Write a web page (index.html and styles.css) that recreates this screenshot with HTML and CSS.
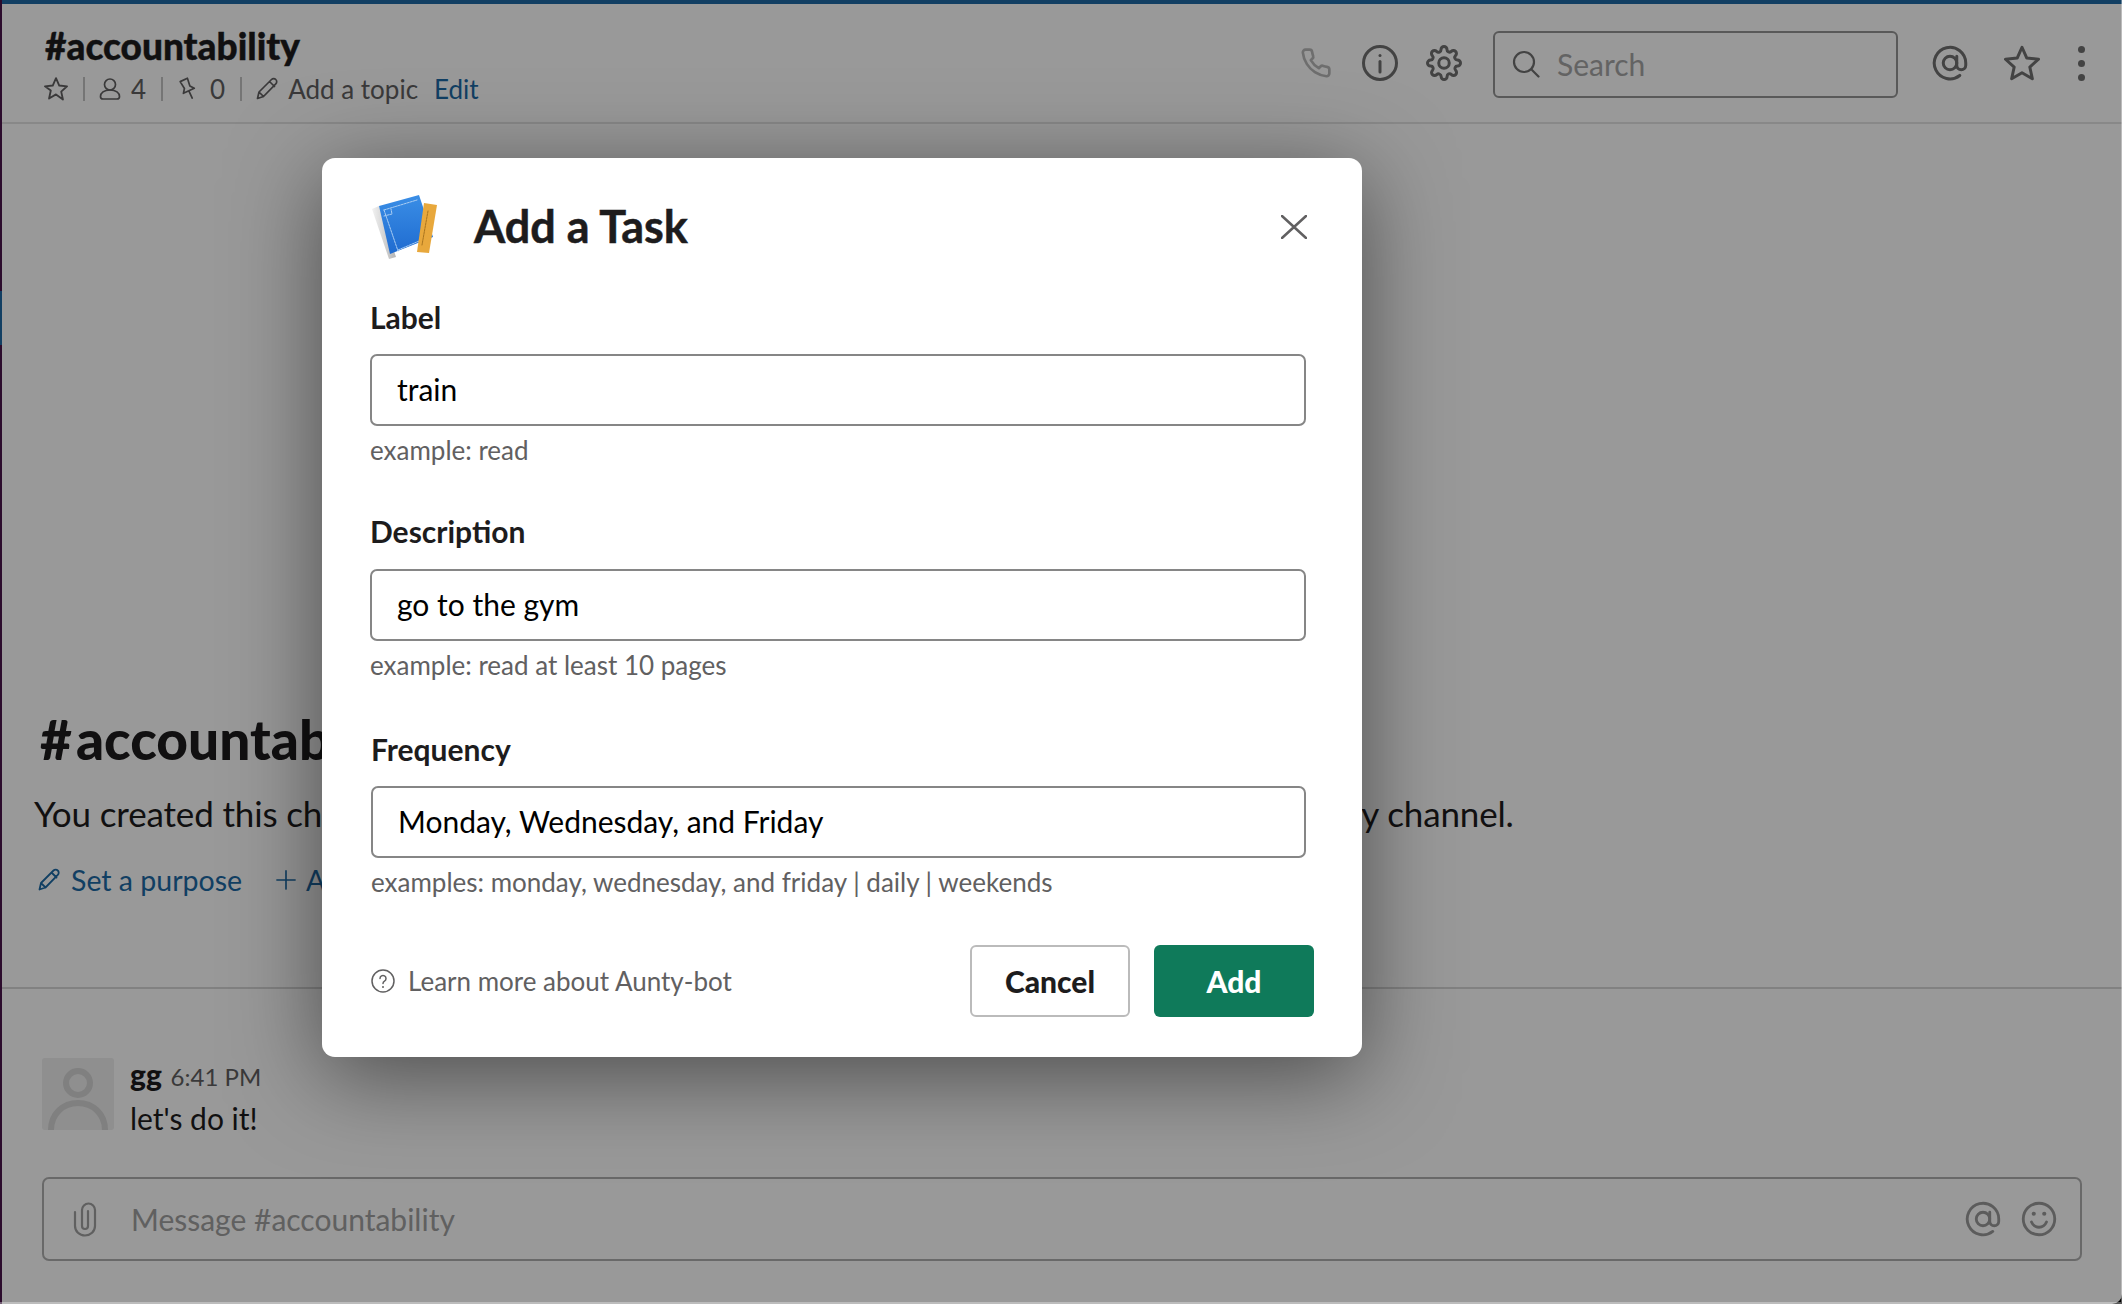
FILE: index.html
```html
<!DOCTYPE html>
<html lang="en">
<head>
  <meta charset="UTF-8" />
  <title>accountability | Slack</title>
  <link rel="stylesheet" href="styles.css">
</head>
<body>
  <div class="app">
    <!-- channel header -->
    <header class="channel-head">
      <div class="channel-info">
        <div class="channel-name">#accountability</div>
        <div class="channel-meta">
          <svg class="meta-icon star" viewBox="0 0 24 24"><path d="M12 2l3 6.8 7.2.7-5.4 4.9 1.6 7.3L12 17l-6.4 3.7 1.6-7.3L1.800 9.500 9 8.800z"/></svg>
          <span class="sep sep-star"></span>
          <svg class="meta-icon person" viewBox="0 0 24 24"><circle cx="12" cy="7.500" r="5.500"/><path d="M12 13c-6 0-9.500 3-9.500 6.500 0 1.800 1 2.500 2.500 2.500h14c1.500 0 2.500-.7 2.500-2.500C21.500 16 18 13 12 13z"/></svg>
          <span class="meta-num">4</span>
          <span class="sep"></span>
          <svg class="meta-icon pin" viewBox="0 0 24 24"><path d="M8 2h8l-1 8 3 4H6l3-4zM12 14v8" transform="rotate(-25 12 12)"/></svg>
          <span class="meta-num num-pins">0</span>
          <span class="sep"></span>
          <svg class="meta-icon pencil" viewBox="0 0 24 24"><path d="M2.500 21.500l1.500-6.500L16.500 2.500a3 3 0 0 1 4.300 0h0a3 3 0 0 1 0 4.300L8.500 19.500zM4 15l4.500 4.500M14.500 4.500l5 5"/></svg>
          <span class="topic">Add a topic</span>
          <a class="link edit">Edit</a>
        </div>
      </div>
      <div class="head-tools">
        <svg class="tool phone" viewBox="0 0 24 24"><path d="M22 16.920v3a2 2 0 0 1-2.180 2 19.790 19.790 0 0 1-8.630-3.070 19.500 19.500 0 0 1-6-6 19.790 19.790 0 0 1-3.070-8.670A2 2 0 0 1 4.110 2h3a2 2 0 0 1 2 1.720 12.840 12.840 0 0 0 .7 2.810 2 2 0 0 1-.45 2.110L8.090 9.910a16 16 0 0 0 6 6l1.270-1.270a2 2 0 0 1 2.110-.45 12.840 12.840 0 0 0 2.810.7A2 2 0 0 1 22 16.920z"/></svg>
        <svg class="tool info" viewBox="0 0 24 24"><circle cx="12" cy="12" r="11"/><path d="M12 11v7"/><circle class="dot" cx="12" cy="7" r="1"/></svg>
        <svg class="tool gear" viewBox="0 0 24 24"><circle cx="12" cy="12" r="3.500"/><path d="M19.400 15a1.650 1.650 0 0 0 .33 1.820l.06.06a2 2 0 0 1 0 2.830 2 2 0 0 1-2.830 0l-.06-.06a1.650 1.650 0 0 0-1.820-.33 1.650 1.650 0 0 0-1 1.510V21a2 2 0 0 1-2 2 2 2 0 0 1-2-2v-.09A1.650 1.650 0 0 0 9 19.400a1.650 1.650 0 0 0-1.820.33l-.06.06a2 2 0 0 1-2.830 0 2 2 0 0 1 0-2.830l.06-.06a1.650 1.650 0 0 0 .33-1.820 1.650 1.650 0 0 0-1.510-1H3a2 2 0 0 1-2-2 2 2 0 0 1 2-2h.09A1.650 1.650 0 0 0 4.600 9a1.650 1.650 0 0 0-.33-1.820l-.06-.06a2 2 0 0 1 0-2.830 2 2 0 0 1 2.830 0l.06.06a1.650 1.650 0 0 0 1.820.33H9a1.650 1.650 0 0 0 1-1.510V3a2 2 0 0 1 2-2 2 2 0 0 1 2 2v.09a1.650 1.650 0 0 0 1 1.510 1.650 1.650 0 0 0 1.820-.33l.06-.06a2 2 0 0 1 2.830 0 2 2 0 0 1 0 2.830l-.06.06a1.650 1.650 0 0 0-.33 1.820V9a1.650 1.650 0 0 0 1.510 1H21a2 2 0 0 1 2 2 2 2 0 0 1-2 2h-.09a1.650 1.650 0 0 0-1.510 1z"/></svg>
        <div class="search">
          <svg class="search-icon" viewBox="0 0 28 28"><circle cx="12" cy="12" r="10"/><path d="M19.500 19.500l7 7"/></svg>
          <span>Search</span>
        </div>
        <svg class="tool at" viewBox="0 0 24 24"><circle cx="12" cy="12" r="4.500"/><path d="M16.500 7.500v6a3 3 0 0 0 6 0V12a10.500 10.500 0 1 0-4 8.300"/></svg>
        <svg class="tool fav" viewBox="0 0 24 24"><path d="M12 1.500l3.200 7.200 7.800.8-5.800 5.200 1.700 7.800-6.900-4-6.900 4 1.700-7.800L1 9.500l7.800-.8z"/></svg>
        <div class="dots"><i></i><i></i><i></i></div>
      </div>
    </header>

    <!-- channel body -->
    <main class="channel-body">
      <div class="welcome">
        <h1><span class="hash">#</span>accountability</h1>
        <p>You created this channel yesterday. This is the very, very beginning of the #accountability channel.</p>
        <div class="welcome-actions">
          <a class="link action">
            <svg class="action-icon" viewBox="0 0 24 24"><path d="M2.500 21.500l1.500-6.500L16.500 2.500a3 3 0 0 1 4.300 0h0a3 3 0 0 1 0 4.300L8.500 19.500zM4 15l4.500 4.500M14.500 4.500l5 5"/></svg>
            Set a purpose
          </a>
          <a class="link action action-add">
            <svg class="action-icon plus" viewBox="0 0 22 22"><path d="M11 1v20M1 11h20"/></svg>
            Add an app
          </a>
        </div>
      </div>
      <div class="messages">
        <div class="message">
          <div class="avatar">
            <svg viewBox="0 0 72 72"><circle cx="36" cy="25" r="12"/><path d="M9 72c0-16 12-27 27-27s27 11 27 27"/></svg>
          </div>
          <div class="message-text">
            <div><b class="author">gg</b> <span class="time">6:41 PM</span></div>
            <div class="message-line">let's do it!</div>
          </div>
        </div>
      </div>
      <div class="composer">
        <svg class="clip" viewBox="0 0 24 36"><path d="M2 11v14a10 9.500 0 0 0 20 0V9a6.500 6.500 0 0 0-13 0v16a3 3 0 0 0 6 0V10"/></svg>
        <span class="composer-text">Message #accountability</span>
        <svg class="composer-icon" viewBox="0 0 24 24"><circle cx="12" cy="12" r="4.500"/><path d="M16.500 7.500v6a3 3 0 0 0 6 0V12a10.500 10.500 0 1 0-4 8.300"/></svg>
        <svg class="composer-icon" viewBox="0 0 24 24"><circle cx="12" cy="12" r="10.500"/><path d="M7 14c1 2.300 2.800 3.500 5 3.500s4-1.200 5-3.500"/><circle class="dot" cx="8.500" cy="8.500" r="1.400"/><circle class="dot" cx="15.500" cy="8.500" r="1.400"/></svg>
      </div>
    </main>
  </div>

  <div class="sidebar-edge"></div>
  <div class="overlay"></div>

  <!-- dialog -->
  <section class="modal">
    <div class="modal-head">
      <svg class="modal-logo" viewBox="0 0 66 64">
        <defs>
          <linearGradient id="cover" x1="0" y1="0" x2="0" y2="1">
            <stop offset="0" stop-color="#3a8ee6"/>
            <stop offset="1" stop-color="#1f6bd0"/>
          </linearGradient>
          <linearGradient id="spine" x1="0" y1="0" x2="1" y2="0">
            <stop offset="0" stop-color="#f2f2f2"/>
            <stop offset="1" stop-color="#b5b5b5"/>
          </linearGradient>
        </defs>
        <path d="M0 14l7-3 17 51-7 2z" fill="url(#spine)"/>
        <path d="M7 11L47 0l14 42-43 17z" fill="url(#cover)"/>
        <path d="M12 15L45 5M12 15l14 41M26 55l26-11M12 21l8-2-1-5" fill="none" stroke="#a9cdf3" stroke-width="1" stroke-dasharray="2 1"/>
        <path d="M52 8l13 2-8 48-12-1z" fill="#e8a83c"/>
        <path d="M56 16l-6 34" stroke="#a9741e" stroke-width="1" stroke-dasharray="2 1"/>
      </svg>
      <h2>Add a Task</h2>
      <svg class="modal-close" viewBox="0 0 26 24"><path d="M1 1l24 22M25 1L1 23"/></svg>
    </div>

    <div class="field field-label">
      <label>Label</label>
      <div class="input">train</div>
      <div class="hint">example: read</div>
    </div>
    <div class="field field-desc">
      <label>Description</label>
      <div class="input">go to the gym</div>
      <div class="hint">example: read at least 10 pages</div>
    </div>
    <div class="field field-freq">
      <label>Frequency</label>
      <div class="input">Monday, Wednesday, and Friday</div>
      <div class="hint">examples: monday, wednesday, and friday | daily | weekends</div>
    </div>

    <div class="modal-foot">
      <svg class="help-icon" viewBox="0 0 24 24"><circle cx="12" cy="12" r="11"/><path d="M9 9.500a3 3 0 1 1 4.500 2.600c-1 .6-1.500 1.200-1.500 2.400"/><circle class="dot" cx="12" cy="18" r="1"/></svg>
      <span class="help-text">Learn more about Aunty-bot</span>
      <button class="btn btn-cancel" type="button">Cancel</button>
      <button class="btn btn-add" type="button">Add</button>
    </div>
  </section>
</body>
</html>
```

FILE: styles.css
```css
* {
  box-sizing: border-box;
}
html, body {
  margin: 0;
  height: 100%;
}
body {
  position: relative;
  width: 2122px;
  height: 1304px;
  overflow: hidden;
  background: #000;
  font-family: Lato, "Open Sans", sans-serif;
  color: #1d1c1d;
}
svg {
  display: block;
  flex: none;
  fill: none;
  stroke-linecap: round;
  stroke-linejoin: round;
}
.dot {
  stroke: none;
  fill: currentColor;
}

/* app behind the dialog */
.app {
  display: flex;
  flex-direction: column;
  width: 100%;
  height: 100%;
  padding-left: 2px;
  background: #fff;
  border-top: 4px solid #1f6aa5;
  border-bottom-right-radius: 10px;
}
.link {
  color: #1d6aa5;
}
.channel-head {
  display: flex;
  justify-content: space-between;
  height: 120px;
  flex: none;
  border-bottom: 2px solid #e3e3e3;
}
.channel-info {
  padding: 20px 0 0 43px;
}
.channel-name {
  font-size: 37px;
  line-height: 44px;
  font-weight: 900;
  -webkit-text-stroke: 0.4px #1d1c1d;
}
.channel-meta {
  display: flex;
  align-items: center;
  height: 34px;
  margin-top: 4px;
  font-size: 26px;
  color: #616061;
}
.meta-icon {
  stroke: #616061;
  stroke-width: 1.700;
  width: 24px;
  height: 24px;
  margin-left: -2px;
}
.star {
  width: 26px;
  height: 26px;
}
.sep {
  width: 2px;
  height: 24px;
  margin: 0 15px;
  background: #c4c4c4;
}
.sep-star {
  margin-left: 14px;
}
.meta-num {
  margin-left: 9px;
}
.num-pins {
  margin-left: 10px;
}
.topic {
  margin-left: 9px;
}
.edit {
  margin-left: 16px;
}
.head-tools {
  display: flex;
  align-items: center;
  height: 118px;
  padding: 0 37px 0 0;
}
.tool {
  width: 36px;
  height: 36px;
  stroke: #707070;
  stroke-width: 2;
  color: #707070;
}
.phone {
  width: 32px;
  height: 32px;
  stroke: #b8b8b8;
}
.info {
  margin-left: 30px;
}
.gear {
  margin-left: 28px;
}
.search {
  display: flex;
  align-items: center;
  width: 405px;
  height: 67px;
  margin: 2px 34px 0 31px;
  padding-left: 17px;
  border: 2px solid #949494;
  border-radius: 6px;
  font-size: 30px;
  color: #a6a6a6;
}
.search-icon {
  width: 28px;
  height: 28px;
  margin-right: 17px;
  stroke: #707070;
  stroke-width: 2.200;
}
.fav {
  margin-left: 36px;
}
.dots {
  display: flex;
  flex-direction: column;
  gap: 7px;
  margin-left: 38px;
}
.dots i {
  display: block;
  width: 7px;
  height: 7px;
  border-radius: 50%;
  background: #707070;
}

.channel-body {
  display: flex;
  flex-direction: column;
  flex: 1;
  min-height: 0;
}
.welcome {
  margin-top: auto;
  height: 284px;
  padding-left: 32px;
  border-bottom: 2px solid #d8d8d8;
}
.welcome h1 {
  margin: 0 0 0 6px;
  font-size: 55px;
  line-height: 68px;
  font-weight: 900;
}
.hash {
  margin-right: 4px;
}
.welcome p {
  margin: 17px 0 0;
  font-size: 35px;
  line-height: 46px;
  letter-spacing: -0.15px;
  white-space: nowrap;
}
.welcome-actions {
  display: flex;
  margin-top: 24px;
  font-size: 28.500px;
  line-height: 40px;
}
.action {
  display: flex;
  align-items: center;
  margin-left: 3px;
}
.action-add {
  margin-left: 34px;
}
.action-icon {
  width: 24px;
  height: 24px;
  margin-right: 10px;
  stroke: #1d6aa5;
  stroke-width: 1.800;
}
.plus {
  width: 20px;
  height: 20px;
}
.messages {
  padding: 69px 0 0 40px;
}
.message {
  display: flex;
  height: 72px;
}
.avatar {
  width: 72px;
  height: 72px;
  overflow: hidden;
  border-radius: 3px;
  background: #eee;
}
.avatar svg {
  stroke: #d5d5d5;
  stroke-width: 6;
}
.message-text {
  margin: -4px 0 0 16px;
  font-size: 30px;
  line-height: 40px;
}
.author {
  font-weight: 900;
}
.time {
  margin-left: 1px;
  font-size: 24px;
  color: #616061;
}
.message-line {
  margin-top: 1px;
}
.composer {
  display: flex;
  align-items: center;
  width: 2040px;
  height: 84px;
  margin: 47px 0 43px 40px;
  padding: 0 23px 0 29px;
  border: 2px solid #b0b0b0;
  border-radius: 7px;
}
.clip {
  width: 24px;
  height: 36px;
  stroke: #a0a0a0;
  stroke-width: 2.200;
}
.composer-text {
  flex: 1;
  margin-left: 34px;
  font-size: 30px;
  color: #a0a0a0;
}
.composer-icon {
  width: 36px;
  height: 36px;
  margin-left: 20px;
  stroke: #9a9a9a;
  stroke-width: 1.900;
  color: #9a9a9a;
}

/* things over the app */
.sidebar-edge {
  position: absolute;
  left: 0;
  top: 0;
  bottom: 0;
  width: 2px;
  background: linear-gradient(#4a154b 0, #4a154b 291px, #1f6aa5 291px, #1f6aa5 345px, #4a154b 345px);
}
.overlay {
  position: absolute;
  inset: 0;
  background: rgba(0, 0, 0, 0.4);
  box-shadow: inset -1px -2px 0 rgba(255, 255, 255, 0.35);
}
.modal {
  position: absolute;
  left: 322px;
  top: 158px;
  width: 1040px;
  height: 899px;
  padding: 38px 48px 40px 48px;
  border-radius: 13px;
  background: #fff;
  box-shadow: 0 18px 90px rgba(0, 0, 0, 0.5);
}
.modal-head {
  display: flex;
  align-items: center;
  height: 62px;
}
.modal-logo {
  width: 66px;
  height: 64px;
  margin-left: 2px;
}
.modal-head h2 {
  flex: 1;
  margin: 0 0 2px 36px;
  font-size: 45px;
  font-weight: 700;
  -webkit-text-stroke: 0.5px #1d1c1d;
}
.modal-close {
  width: 26px;
  height: 24px;
  margin-right: 7px;
  stroke: #616061;
  stroke-width: 2.500;
}
.field {
  width: 936px;
}
.field label {
  display: block;
  font-size: 30px;
  line-height: 36px;
  font-weight: 700;
}
.field-label {
  margin-top: 41px;
}
.field-label .input {
  margin-top: 19px;
}
.field-desc {
  margin-top: 48px;
}
.field-desc .input {
  margin-top: 20px;
}
.field-freq {
  margin-top: 51px;
  margin-left: 1px;
  width: 935px;
}
.field-freq .input {
  margin-top: 19px;
}
.input {
  height: 72px;
  padding-left: 25px;
  border: 2px solid #868686;
  border-radius: 7px;
  font-size: 30px;
  line-height: 66px;
  color: #000;
}
.hint {
  margin-top: 9px;
  font-size: 26px;
  line-height: 30px;
  color: #616061;
}
.modal-foot {
  display: flex;
  align-items: center;
  margin-top: 48px;
}
.help-icon {
  width: 24px;
  height: 24px;
  margin-left: 1px;
  stroke: #616061;
  stroke-width: 1.500;
  color: #616061;
}
.help-text {
  flex: 1;
  margin-left: 13px;
  font-size: 26px;
  color: #616061;
}
.btn {
  width: 160px;
  height: 72px;
  border-radius: 6px;
  font-family: inherit;
  font-size: 30px;
  font-weight: 900;
}
.btn-cancel {
  border: 2px solid #bbb;
  background: #fff;
  color: #1d1c1d;
}
.btn-add {
  margin-left: 24px;
  border: none;
  background: #0f7a5a;
  color: #fff;
}
```
